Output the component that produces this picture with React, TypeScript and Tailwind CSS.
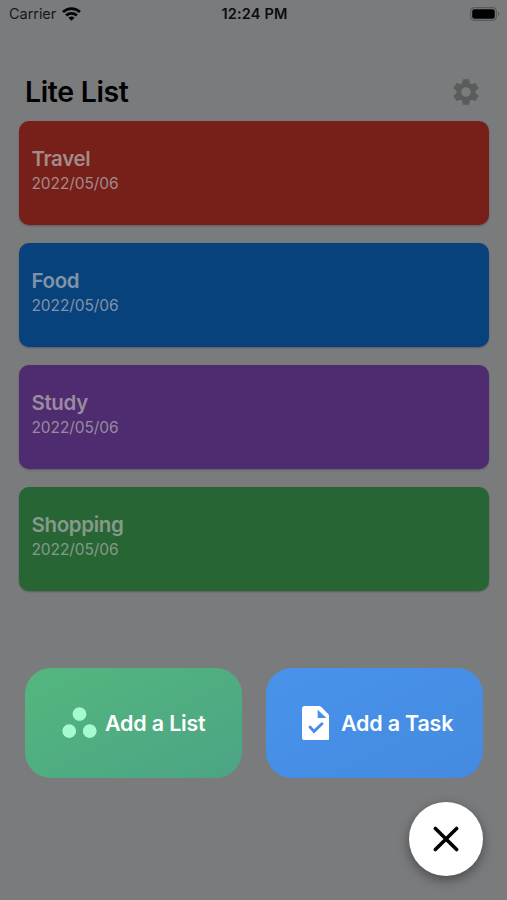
import { useState } from 'react';
import clsx from 'clsx';
import { MdSettings, MdWorkspaces } from 'react-icons/md';

interface TodoList {
  id: string;
  name: string;
  date: string;
  color: string;
}

const LISTS: TodoList[] = [
  { id: 'travel', name: 'Travel', date: '2022/05/06', color: 'bg-[#77201a] text-[#a38b8a]' },
  { id: 'food', name: 'Food', date: '2022/05/06', color: 'bg-[#08427d] text-[#8393a6]' },
  { id: 'study', name: 'Study', date: '2022/05/06', color: 'bg-[#4f2b6f] text-[#988c9f]' },
  { id: 'shopping', name: 'Shopping', date: '2022/05/06', color: 'bg-[#276634] text-[#87998a]' },
];

function WifiIcon() {
  return (
    <svg width="19" height="14" viewBox="0 0 19 14" fill="none" stroke="#050506" strokeWidth="2.7">
      <path d="M1 5C5.8.4 13.2.4 18 5" />
      <path d="M4.1 8.4c3-2.8 7.8-2.8 10.8 0" />
      <path d="M9.5 13.8 6.4 10.7c1.8-1.6 4.4-1.6 6.2 0z" fill="#050506" stroke="none" />
    </svg>
  );
}

function BatteryIcon() {
  return (
    <svg width="30" height="14" viewBox="0 0 30 14">
      <rect x="0.6" y="0.6" width="25.8" height="12.8" rx="4" fill="none" stroke="#595a5c" strokeWidth="1.2" />
      <rect x="2.2" y="2.2" width="22.6" height="9.6" rx="2.4" fill="#020203" />
      <path d="M28 4.8c1.8.6 1.8 3.8 0 4.4z" fill="#595a5c" />
    </svg>
  );
}

function TaskIcon() {
  return (
    <svg width="27.4" height="34.4" viewBox="0 0 82 103" fill="none">
      <path
        d="M9 0h42q4 0 7 3l21 22q3 3 3 7v62a9 9 0 0 1-9 9H9a9 9 0 0 1-9-9V9a9 9 0 0 1 9-9zM47 11v25h26z"
        fill="#fff"
        fillRule="evenodd"
      />
      <path d="M24 63l12 13 24-23" stroke="#468ee5" strokeWidth="8.5" strokeLinecap="round" />
    </svg>
  );
}

function ListCard({ list }: { list: TodoList }) {
  return (
    <li className={clsx('h-[103.5px] rounded-[10px] px-[12.5px] pt-6 shadow-[0_1px_2px_rgba(0,0,0,0.25)]', list.color)}>
      <h2 className="text-[20.5px] leading-[27px] font-semibold tracking-[-0.35px]">{list.name}</h2>
      <p className="text-[15.5px] leading-6 tracking-[-0.08px]">{list.date}</p>
    </li>
  );
}

export default function App() {
  const [isMenuOpen, setIsMenuOpen] = useState(true);

  return (
    <div className="flex h-[900px] w-[507px] flex-col overflow-hidden bg-[#7a7b7d] font-['Inter',sans-serif]">
      {/* Status bar */}
      <div className="grid h-7 grid-cols-3 items-center pr-[7px] pl-[9px] text-[#171719]">
        <div className="flex items-center gap-[6px] text-[14.5px]">
          <span className="tracking-[-0.05px]">Carrier</span>
          <WifiIcon />
        </div>
        <span className="text-center text-[14.5px] font-semibold tracking-[0.2px] text-[#0c0c0e]">12:24 PM</span>
        <div className="flex justify-end">
          <BatteryIcon />
        </div>
      </div>

      {/* Title */}
      <header className="mt-12 flex h-8 items-center justify-between px-[25px]">
        <h1 className="text-[28.5px] font-semibold tracking-[-0.35px] text-[#020203]">Lite List</h1>
        <button aria-label="Settings">
          <MdSettings className="size-8 text-[#5a5c5c]" />
        </button>
      </header>

      {/* Lists */}
      <ul className="mt-[13px] flex flex-col gap-[18.6px] pr-[18px] pl-[19px]">
        {LISTS.map((list) => (
          <ListCard key={list.id} list={list} />
        ))}
      </ul>

      {/* Add actions */}
      {isMenuOpen && (
        <div className="mt-[77.2px] grid grid-cols-2 gap-6 pr-6 pl-[25px] text-[21.5px] font-semibold tracking-[-0.2px] text-white">
          <button className="flex h-[110px] items-center rounded-[26px] bg-linear-to-br from-[#54b77e] to-[#4ba484] pl-[34px]">
            <MdWorkspaces className="size-[41px] shrink-0 text-[#a6fad0]" />
            <span className="ml-[5px] whitespace-nowrap">Add a List</span>
          </button>
          <button className="flex h-[110px] items-center rounded-[26px] bg-linear-to-br from-[#4993eb] to-[#448ae0] pl-[35.5px]">
            <TaskIcon />
            <span className="ml-[12px] whitespace-nowrap">Add a Task</span>
          </button>
        </div>
      )}

      <div className="mt-auto flex justify-end pr-6 pb-6">
        <button
          aria-label="Close"
          onClick={() => setIsMenuOpen(!isMenuOpen)}
          className="flex size-[74px] items-center justify-center rounded-full bg-white shadow-[0_4px_12px_rgba(0,0,0,0.4)]"
        >
          <svg width="26" height="26" viewBox="0 0 26 26" stroke="#000" strokeWidth="3.6" strokeLinecap="round">
            <path d="M2.4 2.4l21.2 21.2M23.6 2.4L2.4 23.6" />
          </svg>
        </button>
      </div>
    </div>
  );
}
